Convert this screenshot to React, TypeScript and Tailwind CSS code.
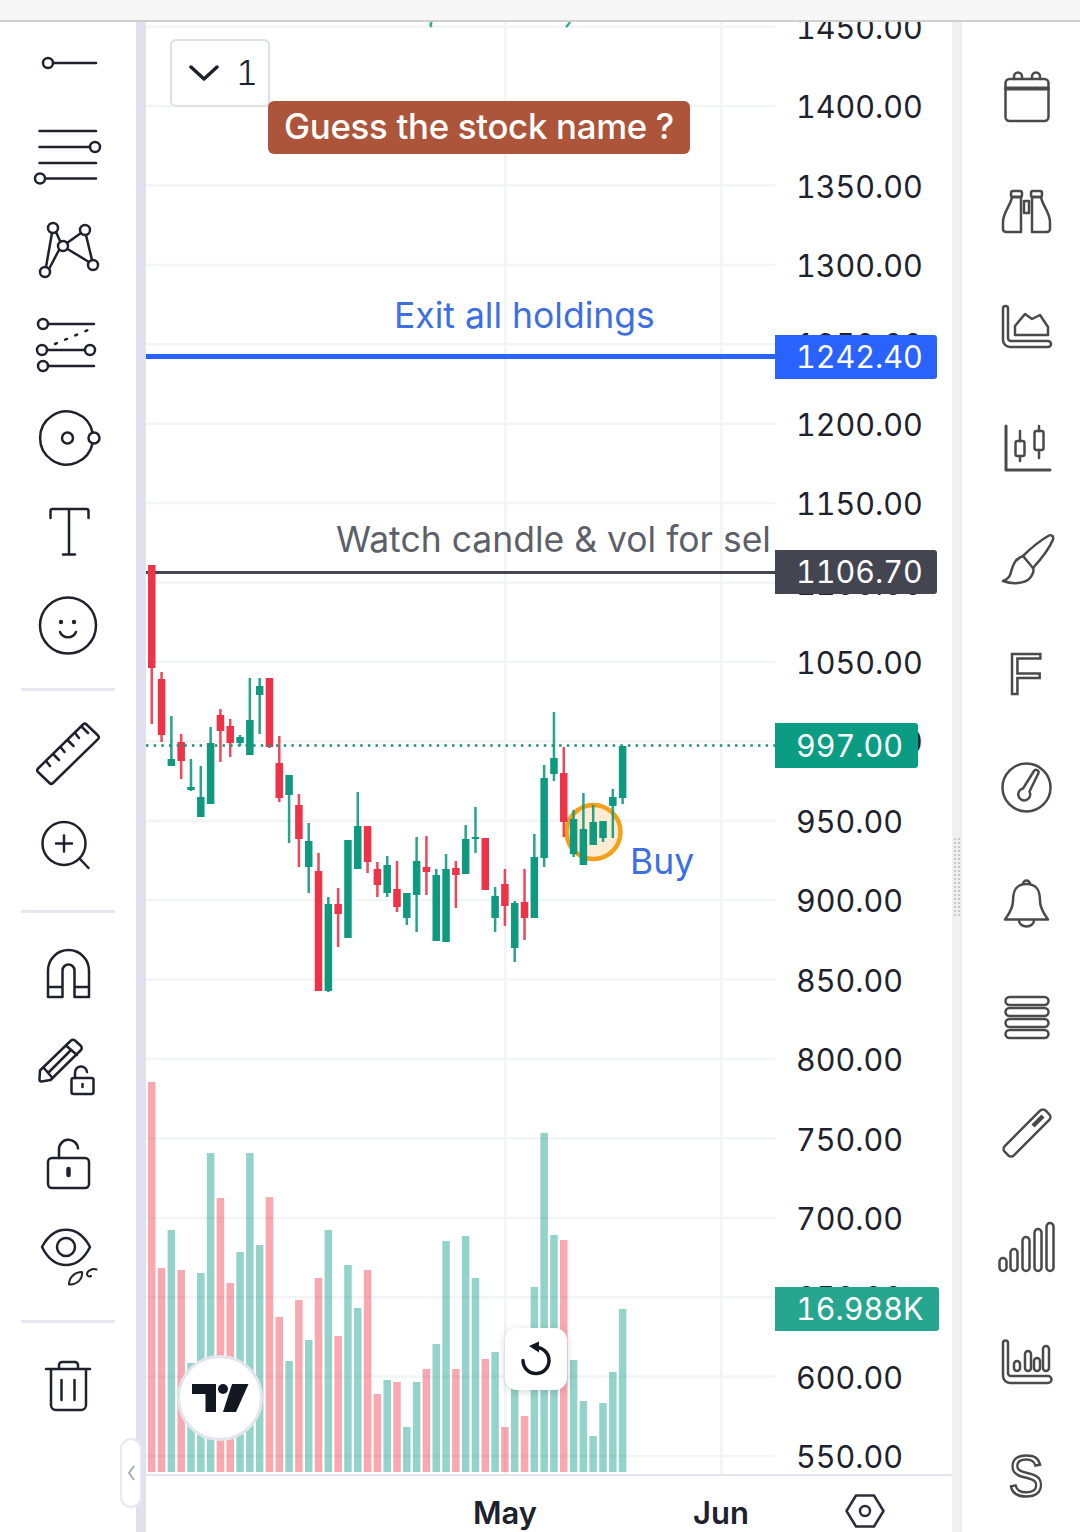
import React from "react";

// [colour, wick top, wick bottom, body top, body bottom, volume top]
type Bar = ["r" | "g", number, number, number, number, number];

const BARS: Bar[] = [
  ["r", 565, 724, 565, 668, 1082],
  ["r", 672, 742, 679, 735, 1268],
  ["g", 716, 766, 759, 766, 1230],
  ["r", 734, 779, 742, 761, 1270],
  ["g", 759, 791, 787, 790, 1363],
  ["g", 766, 817, 797, 817, 1273],
  ["g", 727, 804, 743, 804, 1153],
  ["r", 709, 762, 715, 731, 1198],
  ["r", 719, 757, 726, 743, 1283],
  ["g", 735, 746, 737, 743, 1252],
  ["g", 678, 755, 720, 755, 1153],
  ["g", 678, 734, 686, 695, 1245],
  ["r", 678, 748, 678, 747, 1197],
  ["r", 736, 802, 763, 798, 1317],
  ["g", 775, 843, 775, 795, 1361],
  ["r", 794, 867, 805, 839, 1300],
  ["g", 823, 893, 841, 867, 1340],
  ["r", 853, 991, 871, 991, 1278],
  ["g", 897, 992, 904, 991, 1230],
  ["r", 888, 947, 904, 914, 1336],
  ["g", 840, 938, 840, 938, 1265],
  ["g", 792, 869, 826, 869, 1308],
  ["r", 826, 873, 826, 862, 1270],
  ["r", 862, 897, 869, 885, 1394],
  ["g", 856, 897, 865, 893, 1380],
  ["r", 861, 912, 889, 907, 1382],
  ["g", 893, 925, 893, 918, 1427],
  ["g", 837, 932, 861, 895, 1382],
  ["r", 836, 895, 867, 872, 1369],
  ["g", 869, 941, 875, 941, 1344],
  ["g", 854, 942, 869, 942, 1241],
  ["r", 861, 908, 868, 875, 1369],
  ["g", 825, 874, 839, 874, 1236],
  ["g", 807, 853, 837, 839, 1278],
  ["r", 838, 890, 838, 890, 1359],
  ["g", 887, 932, 896, 918, 1352],
  ["r", 869, 926, 884, 906, 1427],
  ["g", 901, 962, 903, 948, 1385],
  ["r", 869, 940, 902, 918, 1416],
  ["g", 834, 918, 857, 918, 1287],
  ["g", 765, 867, 778, 858, 1133],
  ["g", 712, 781, 758, 774, 1235],
  ["r", 747, 837, 773, 822, 1240],
  ["g", 810, 857, 819, 854, 1360],
  ["g", 793, 865, 829, 865, 1401],
  ["g", 805, 845, 822, 845, 1436],
  ["g", 821, 842, 821, 838, 1403],
  ["g", 789, 838, 797, 806, 1372],
  ["g", 746, 804, 746, 798, 1309],
];

const PRICES = [
  "1450.00", "1400.00", "1350.00", "1300.00", "1250.00", "1200.00", "1150.00", "1100.00", "1050.00", "1000.00",
  "950.00", "900.00", "850.00", "800.00", "750.00", "700.00", "650.00", "600.00", "550.00",
];

const GREEN = "#089981";
const RED = "#f23645";

type RowProps = { top: number; h: number; x0: number; w: number; color: string; children: React.ReactNode };

// each tool row is an svg whose viewBox is cut out of page coordinates
const Row = ({ top, h, x0, w, color, children }: RowProps) => (
  <svg
    width={w}
    height={h}
    viewBox={`${x0} ${top} ${w} ${h}`}
    fill="none"
    stroke={color}
    strokeWidth={2.5}
    strokeLinecap="round"
    strokeLinejoin="round"
    className="block shrink-0"
  >
    {children}
  </svg>
);

const L = (p: { top: number; h: number; children: React.ReactNode }) => (
  <Row top={p.top} h={p.h} x0={0} w={136} color="#1e222d">
    {p.children}
  </Row>
);

const R = (p: { top: number; h: number; children: React.ReactNode }) => (
  <Row top={p.top} h={p.h} x0={962} w={118} color="#4a4a4a">
    {p.children}
  </Row>
);

const Divider = () => <div className="h-[3px] mx-[21px] shrink-0 bg-[#e6e8f0]" />;

const LeftToolbar = () => (
  <div className="w-[136px] shrink-0 flex flex-col bg-white">
    <L top={22} h={87}>
      <circle cx={48} cy={63} r={5} />
      <path d="M53 63H96" />
    </L>
    <L top={109} h={93}>
      <path d="M39.500 131H96M39.500 147H90M39.500 163H96M46 178.500H96" />
      <circle cx={95} cy={147} r={5} />
      <circle cx={40} cy={178.500} r={5} />
    </L>
    <L top={202} h={94}>
      <circle cx={53} cy={228} r={5} />
      <circle cx={85} cy={230} r={5} />
      <circle cx={63} cy={246} r={5} />
      <circle cx={93} cy={265} r={5} />
      <circle cx={45} cy={272} r={5} />
      <path d="M46 267L52 233M56 232L60.500 242M67 243L81 233M86 235L92 260M67.500 249L89 262M49 269L59 250" />
    </L>
    <L top={296} h={95}>
      <circle cx={43} cy={324} r={5} />
      <path d="M48 324H94" />
      <path d="M55 344L88 330" strokeDasharray="2 9" />
      <circle cx={42} cy={350} r={5} />
      <circle cx={90} cy={350} r={5} />
      <path d="M47 350H85" />
      <circle cx={43} cy={366} r={5} />
      <path d="M48 366H94" />
    </L>
    <L top={391} h={93}>
      <path d="M92.500 432.500A26.500 26.500 0 1 0 92.500 443.500" />
      <circle cx={67.500} cy={438} r={5.500} />
      <circle cx={94} cy={438} r={5.500} />
    </L>
    <L top={484} h={94}>
      <path d="M50.500 518V511A2 2 0 0 1 52.500 509H86.500A2 2 0 0 1 88.500 511V518M69 509V554.500M63 554.500H75" />
    </L>
    <L top={578} h={110}>
      <circle cx={68} cy={625.500} r={28} />
      <circle cx={61} cy={622} r={2.200} fill="#1e222d" stroke="none" />
      <circle cx={74} cy={622} r={2.200} fill="#1e222d" stroke="none" />
      <path d="M60 632C63 639 73 639 76 632" />
    </L>
    <Divider />
    <L top={691} h={108}>
      <path d="M38 768.500L83 724.500A2.500 2.500 0 0 1 86.500 724.500L98 735.500A2.500 2.500 0 0 1 98 739L53 783A2.500 2.500 0 0 1 49.500 783L38 772A2.500 2.500 0 0 1 38 768.500Z" />
      <path d="M46 761L50 766M53 754L59 760M60.500 747L64.500 752M67.500 740L73.500 746M75 733L79 738M82 727L88 733" />
    </L>
    <L top={799} h={111}>
      <circle cx={64} cy={843.500} r={21.500} />
      <path d="M64 835.500V851.500M56 843.500H72M80 859L88.500 868" />
    </L>
    <Divider />
    <L top={913} h={107}>
      <path d="M48 997V970.500A20.500 20.500 0 0 1 89 970.500V997H74.500V970.500A6 6 0 0 0 62.500 970.500V997ZM48 987H62.500M74.500 987H89" />
    </L>
    <L top={1020} h={96}>
      <path d="M40 1070.500L71 1040.500Q73 1039 75 1040.500L81 1046Q82.500 1048 81 1050L50.500 1080L41.500 1081.500Q39.500 1081.500 39.500 1079.500Z" />
      <path d="M43.500 1067.500L52.500 1078M49 1072L71 1050M66 1045.500L77 1055" />
      <rect x={71.500} y={1078} width={22} height={16} rx={2} fill="#fff" />
      <path d="M75 1078V1073A6 6 0 0 1 87 1072" />
      <path d="M82.500 1084V1087" />
    </L>
    <L top={1116} h={94}>
      <rect x={48} y={1158} width={41} height={30} rx={4} />
      <path d="M59 1158V1150A9 9 0 0 1 78 1148.500" />
      <path d="M68.500 1169V1175" strokeWidth={4.500} />
    </L>
    <L top={1210} h={110}>
      <path d="M42 1247C54 1224 78 1224 90 1247C78 1271 54 1271 42 1247Z" />
      <circle cx={66} cy={1247} r={9} />
      <path d="M69 1284.500C69 1277 75 1272 82 1272C83 1278 78 1285 69 1284.500ZM96.500 1269.500C92 1268 87 1271 87 1274C87 1276 89 1277 91 1276" strokeWidth={2} />
    </L>
    <Divider />
    <L top={1323} h={209}>
      <path d="M46 1369H90M51 1369V1405A5 5 0 0 0 56 1410H81A5 5 0 0 0 86 1405V1369M59 1369V1365A3 3 0 0 1 62 1362H75A3 3 0 0 1 78 1365V1369M61.500 1380V1400M74.500 1380V1400" />
    </L>
  </div>
);

const RightToolbar = () => (
  <div className="w-[118px] shrink-0 flex flex-col bg-white">
    <R top={22} h={133}>
      <rect x={1005.500} y={79} width={43} height={42} rx={4} />
      <path d="M1006 88.500H1048" strokeWidth={4} />
      <path d="M1014 79V76.500A4 4 0 0 1 1022 76.500V79M1032 79V76.500A4 4 0 0 1 1040 76.500V79" />
    </R>
    <R top={155} h={114}>
      <path d="M1012 197C1011 205 1003 212 1003 222V229A3 3 0 0 0 1006 232H1021V197Z" />
      <path d="M1041 197C1042 205 1050 212 1050 222V229A3 3 0 0 1 1047 232H1032V197Z" />
      <rect x={1011} y={191} width={11} height={6} rx={2} />
      <rect x={1031} y={191} width={11} height={6} rx={2} />
      <rect x={1024} y={201} width={5} height={12} />
    </R>
    <R top={269} h={118}>
      <path d="M1003 308.500A2.500 2.500 0 0 1 1008 308.500V338A3 3 0 0 0 1011 341H1048A3 3 0 0 1 1048 347H1010A7 7 0 0 1 1003 340Z" />
      <path d="M1015 335V326L1025 314L1032 319L1040 315L1048 327V335Z" />
    </R>
    <R top={387} h={116}>
      <path d="M1006 426V470H1050" strokeWidth={3} />
      <rect x={1015.500} y={441} width={9} height={15} rx={2} />
      <path d="M1020 431V441M1020 456V461" />
      <rect x={1034.500} y={431} width={9} height={19} rx={2} />
      <path d="M1039 426V431M1039 450V458" />
    </R>
    <R top={503} h={112}>
      <path d="M1049 535.500C1051 534.500 1054 536 1053 539.500C1050 547 1042 558 1033 568L1023 556C1030 549 1041 540 1049 535.500Z" />
      <path d="M1023 556C1014 559 1013 566 1011 572C1010 577 1006 580 1003 581C1012 584.500 1025 584 1030 578C1033 574 1034 570 1033 568" />
    </R>
    <div className="h-[115px] shrink-0 flex items-center justify-center">
      <span className="font-['Liberation_Sans',sans-serif] text-[58px] leading-none text-white [-webkit-text-stroke:2.5px_#4a4a4a] pl-[8px] pt-[2px]">F</span>
    </div>
    <R top={730} h={115}>
      <circle cx={1026.500} cy={787.500} r={24} />
      <path d="M1034 771A2.500 2.500 0 0 1 1038.500 773L1029.500 791.500A6 6 0 1 1 1023 788.500Z" />
    </R>
    <R top={845} h={115}>
      <path d="M1026.500 884C1015 884 1013 892 1013 901C1013 909 1008 915 1005 919.500H1048C1045 915 1040 909 1040 901C1040 892 1038 884 1026.500 884Z" />
      <path d="M1023 884A3.500 3.500 0 0 1 1030 884M1019 920.500A7.500 6 0 0 0 1034 920.500" />
    </R>
    <R top={960} h={115}>
      <rect x={1005.500} y={997} width={43} height={8} rx={4} />
      <rect x={1005.500} y={1008} width={43} height={8} rx={4} />
      <rect x={1005.500} y={1019} width={43} height={8} rx={4} />
      <rect x={1005.500} y={1030} width={43} height={8} rx={4} />
    </R>
    <R top={1075} h={115}>
      <rect x={998} y={1126.500} width={58} height={13} rx={4} transform="rotate(-45 1027 1133)" />
      <path d="M1032 1124L1042 1114" strokeWidth={4.500} strokeLinecap="butt" transform="translate(1 2)" />
    </R>
    <R top={1190} h={114}>
      <rect x={999.500} y={1258} width={7} height={13} rx={3.500} />
      <rect x={1010.500} y={1249} width={7} height={22} rx={3.500} />
      <rect x={1022.500} y={1237} width={7} height={34} rx={3.500} />
      <rect x={1034.500} y={1229} width={7} height={42} rx={3.500} />
      <rect x={1046.500} y={1223} width={7} height={48} rx={3.500} />
    </R>
    <R top={1304} h={114}>
      <path d="M1003 1343A2.500 2.500 0 0 1 1008 1343V1373A3 3 0 0 0 1011 1376H1048A3 3 0 0 1 1048 1383H1010A7 7 0 0 1 1003 1376Z" />
      <rect x={1014} y={1361} width={6} height={10} rx={3} />
      <rect x={1025} y={1351} width={6} height={20} rx={3} />
      <rect x={1034} y={1358} width={6} height={13} rx={3} />
      <rect x={1043} y={1346} width={6} height={25} rx={3} />
    </R>
    <div className="h-[114px] shrink-0 flex items-center justify-center">
      <span className="font-['Liberation_Sans',sans-serif] text-[58px] leading-none text-white [-webkit-text-stroke:2.5px_#4a4a4a] pl-[10px] pt-[2px] scale-x-90">S</span>
    </div>
  </div>
);

const ChartDrawing = () => (
  <svg width={629} height={1452} viewBox="146 22 629 1452" className="block">
    {PRICES.map((_, i) => (
      <rect key={i} x={146} y={25.400 + i * 79.410} width={629} height={2.500} fill="#f3f4f6" />
    ))}
    <rect x={504} y={22} width={2.500} height={1452} fill="#f3f4f6" />
    <rect x={720} y={22} width={2.500} height={1452} fill="#f3f4f6" />

    {BARS.map((b, i) => (
      <rect key={i} x={148 + i * 9.810} y={b[5]} width={7.500} height={1472 - b[5]} fill={b[0] === "g" ? GREEN : RED} opacity={0.43} />
    ))}

    <path d="M432 22Q429.500 24 431.500 27M566 27Q568.500 25 570 22" stroke={GREEN} strokeWidth={2.500} fill="none" opacity={0.8} />

    <rect x={146} y={354} width={629} height={5} fill="#2962ff" />
    <rect x={146} y={571} width={629} height={3} fill="#434651" />

    <circle cx={593.500} cy={832} r={27} fill="#fdebd3" stroke="#f59f1a" strokeWidth={4.500} />

    {BARS.map((b, i) => {
      const cx = 151.750 + i * 9.810;
      const c = b[0] === "g" ? "#0f9a80" : "#ee3349";
      return (
        <g key={i} fill={c}>
          <rect x={cx - 1.250} y={b[1]} width={2.500} height={b[2] - b[1]} opacity={0.9} />
          <rect x={cx - 3.750} y={b[3]} width={7.500} height={b[4] - b[3]} />
        </g>
      );
    })}

    <path d="M146 745.500H775" stroke="#1b8f78" strokeWidth={2.500} strokeDasharray="2.500 5.150" />
  </svg>
);

const Label = ({ className, children }: { className: string; children: React.ReactNode }) => (
  <div className={`absolute whitespace-nowrap font-['Inter',sans-serif] leading-none ${className}`}>{children}</div>
);

const PriceTag = ({ className, children }: { className: string; children: React.ReactNode }) => (
  <div className={`absolute left-0 h-[44px] flex items-center rounded-r-[3px] text-[30.500px] font-['Inter',sans-serif] tabular-nums text-white ${className}`}>
    {children}
  </div>
);

const TvLogo = () => (
  <svg width={58} height={30} viewBox="192 1384 58 30" className="block">
    <path d="M193 1385H217V1413H206.500V1395H193Z" fill="#131722" />
    <circle cx={224} cy={1390} r={5} fill="#131722" />
    <path d="M233 1385H249.500L237 1413H224Z" fill="#131722" />
  </svg>
);

const PlotArea = () => (
  <div className="relative w-[629px] h-full overflow-hidden">
    <ChartDrawing />

    <div className="absolute left-[24px] top-[17px] w-[100px] h-[68px] flex items-center gap-[17px] pl-[17px] bg-white border-[2.5px] border-[#dfe1e8] rounded-[6px]">
      <svg width={30} height={18} viewBox="0 0 30 18" fill="none" stroke="#1e222d" strokeWidth={3.500} strokeLinecap="round" strokeLinejoin="round">
        <path d="M2 3L15 15L28 3" />
      </svg>
      <span className="font-['Inter',sans-serif] text-[34px] font-light tabular-nums text-[#1e222d] leading-none">1</span>
    </div>

    <div className="absolute left-[122px] top-[79px] w-[422px] h-[53px] flex items-center justify-center pb-[2px] rounded-[6px] bg-[#ad553b] text-white font-['Inter',sans-serif] font-medium text-[34.800px] tracking-[-0.3px]">
      Guess the stock name ?
    </div>

    <Label className="left-[248px] top-[276px] text-[35.500px] text-[#3d6fe3]">Exit all holdings</Label>
    <Label className="left-[190px] top-[500px] text-[35.500px] text-[#5d6068]">Watch candle &amp; vol for sel</Label>
    <Label className="left-[484px] top-[822px] text-[35.500px] text-[#3d6fe3]">Buy</Label>

    <div className="absolute left-[31px] top-[1333px] w-[86px] h-[86px] rounded-full bg-white border-[3px] border-[#e3e5ec] flex items-center justify-center">
      <TvLogo />
    </div>

    <div className="absolute left-[359px] top-[1306px] w-[62px] h-[62px] rounded-[12px] bg-white shadow-[0_2px_8px_rgba(30,34,45,0.18)] flex items-center justify-center">
      <svg width={36} height={36} viewBox="518 1343 36 36" fill="none">
        <path d="M536 1349.500A13 13 0 1 1 523 1362.500" stroke="#131722" strokeWidth={3.500} strokeLinecap="round" />
        <path d="M539 1343.500V1354.500L529 1348Z" fill="#131722" />
      </svg>
    </div>
  </div>
);

const PriceScale = () => (
  <div className="relative w-[177px] h-full overflow-hidden">
    <div className="-mt-[35px] flex flex-col">
      {PRICES.map((p) => (
        <div key={p} className="h-[79.41px] shrink-0 flex items-center pl-[21px] pt-[2px] text-[30.500px] font-['Inter',sans-serif] tabular-nums text-[#1e222d]">
          {p}
        </div>
      ))}
    </div>
    <PriceTag className="top-[313px] w-[162px] bg-[#2962ff] pl-[21px]">1242.40</PriceTag>
    <PriceTag className="top-[528px] w-[162px] bg-[#434651] pl-[21px]">1106.70</PriceTag>
    <PriceTag className="top-[701px] w-[143px] h-[45px] bg-[#0b9d83] pl-[21px]">997.00</PriceTag>
    <PriceTag className="top-[1265px] w-[164px] bg-[#26a68f] pl-[21px]">16.988K</PriceTag>
  </div>
);

const TimeAxis = () => (
  <div className="relative flex-1 border-t-[2.5px] border-[#e3e5ee]">
    <div className="absolute left-[359px] top-[21px] -translate-x-1/2 font-['Inter',sans-serif] font-semibold text-[31px] leading-none text-[#1e222d]">May</div>
    <div className="absolute left-[575px] top-[21px] -translate-x-1/2 font-['Inter',sans-serif] font-semibold text-[31px] leading-none text-[#1e222d]">Jun</div>
    <svg width={42} height={36} viewBox="844 1493 42 36" fill="none" stroke="#2a2e39" strokeWidth={2.500} strokeLinejoin="round" className="absolute left-[698px] top-[17px]">
      <path d="M856 1495.500H874L883.500 1511L874 1526.500H856L846.500 1511Z" />
      <circle cx={865} cy={1511} r={5} />
    </svg>
  </div>
);

const App = () => {
  return (
    <div className="relative w-[1080px] h-[1532px] overflow-hidden flex flex-col bg-white">
      <div className="h-[22px] shrink-0 bg-[#f7f7f7] border-b-2 border-[#cfcfcf]" />
      <div className="flex flex-1 min-h-0">
        <LeftToolbar />
        <div className="w-[10px] shrink-0 bg-[#dfe1ee]" />
        <div className="w-[806px] shrink-0 flex flex-col">
          <div className="flex h-[1452px] shrink-0">
            <PlotArea />
            <PriceScale />
          </div>
          <TimeAxis />
        </div>
        <div className="relative w-[10px] shrink-0 bg-[#f0f0f0]">
          <div className="absolute left-[2px] top-[816px] w-[6px] h-[78px] border-x-2 border-dotted border-[#c9c9c9]" />
        </div>
        <RightToolbar />
      </div>

      <div className="absolute left-[120px] top-[1438px] w-[22px] h-[70px] rounded-full bg-white border-2 border-[#e8e9f0] flex items-center justify-center">
        <svg width={10} height={20} viewBox="0 0 10 20" fill="none" stroke="#a9acb5" strokeWidth={2}>
          <path d="M8 3L3 10L8 17" />
        </svg>
      </div>
    </div>
  );
};

export default App;
